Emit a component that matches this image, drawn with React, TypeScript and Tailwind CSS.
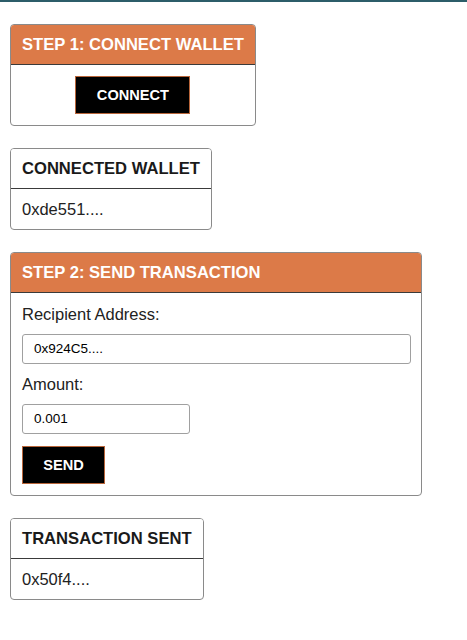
import React from "react";

const font = { fontFamily: '"Liberation Sans", Arial, sans-serif' };

function Card({
  title,
  orange,
  width,
  children,
}: {
  title: string;
  orange?: boolean;
  width?: string;
  children: React.ReactNode;
}) {
  return (
    <div
      className={`border border-[#8a8a8a] rounded-[4px] overflow-hidden bg-white ${width ?? "w-fit"}`}
    >
      <div
        className={`h-[40px] flex items-center px-[11px] border-b border-[#3a3a3a] text-[16.6px] font-bold leading-[20px] ${
          orange ? "bg-[#dc7a48] text-white" : "bg-white text-[#1a1a1a]"
        }`}
      >
        {title}
      </div>
      {children}
    </div>
  );
}

export default function App() {
  return (
    <div style={font} className="min-h-[640px] bg-white">
      <div className="h-[2px] bg-[#2c5d69]" />
      <div className="flex flex-col items-start gap-[22px] pl-[10px] pt-[22px]">
        <Card title="STEP 1: CONNECT WALLET" orange>
          <div className="flex justify-center pt-[11px] pb-[11px]">
            <button className="w-[115px] h-[38px] bg-black border border-[#b8653a] text-white font-bold text-[14.6px] leading-none">
              CONNECT
            </button>
          </div>
        </Card>

        <Card title="CONNECTED WALLET">
          <div className="h-[40px] flex items-center px-[11px] text-[16.5px] text-[#222]">
            0xde551....
          </div>
        </Card>

        <Card title="STEP 2: SEND TRANSACTION" orange width="w-[412px]">
          <div className="flex flex-col items-start px-[11px] pt-[11px] pb-[11px]">
            <div className="text-[16.5px] leading-[20px] text-[#222]">
              Recipient Address:
            </div>
            <div className="mt-[10px] w-[389px] h-[30px] border border-[#a0a0a0] rounded-[3px] flex items-center px-[11px] text-[13.5px] text-black">
              0x924C5....
            </div>
            <div className="mt-[10px] text-[16.5px] leading-[20px] text-[#222]">
              Amount:
            </div>
            <div className="mt-[10px] w-[168px] h-[30px] border border-[#a0a0a0] rounded-[3px] flex items-center px-[11px] text-[13.5px] text-black">
              0.001
            </div>
            <button className="mt-[12px] w-[83px] h-[38px] bg-black border border-[#b8653a] text-white font-bold text-[14.6px] leading-none">
              SEND
            </button>
          </div>
        </Card>

        <Card title="TRANSACTION SENT">
          <div className="h-[40px] flex items-center px-[11px] text-[16.5px] text-[#222]">
            0x50f4....
          </div>
        </Card>
      </div>
    </div>
  );
}
